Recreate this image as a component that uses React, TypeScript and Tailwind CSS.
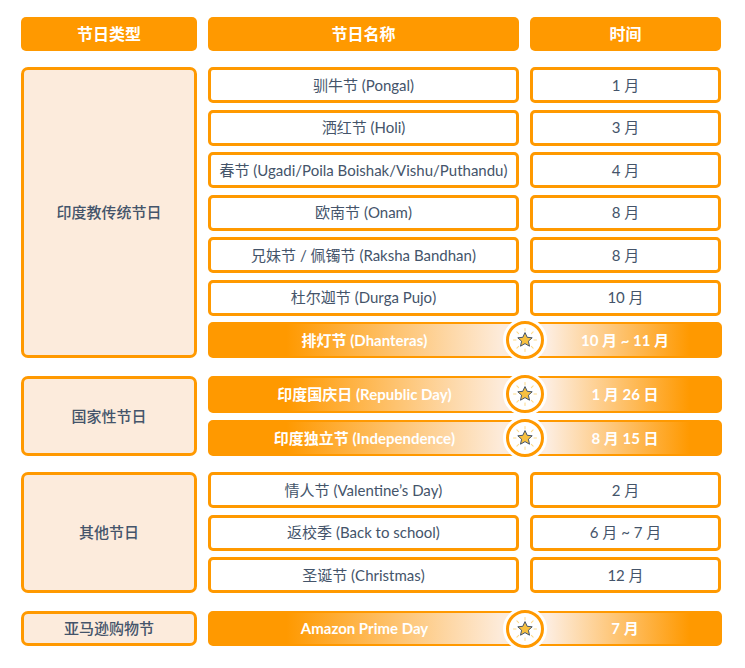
import React from "react";

type Row = { name: string; time: string; hl?: boolean };
type Group = { label: string; rows: Row[]; mt: string; rowH: string; gap: string };

const groups: Group[] = [
  {
    label: "印度教传统节日",
    mt: "mt-[16px]",
    rowH: "h-[36px]",
    gap: "gap-[6.5px]",
    rows: [
      { name: "驯牛节 (Pongal)", time: "1 月" },
      { name: "洒红节 (Holi)", time: "3 月" },
      { name: "春节 (Ugadi/Poila Boishak/Vishu/Puthandu)", time: "4 月" },
      { name: "欧南节 (Onam)", time: "8 月" },
      { name: "兄妹节 / 佩镯节 (Raksha Bandhan)", time: "8 月" },
      { name: "杜尔迦节 (Durga Pujo)", time: "10 月" },
      { name: "排灯节 (Dhanteras)", time: "10 月 ~ 11 月", hl: true },
    ],
  },
  {
    label: "国家性节日",
    mt: "mt-[18px]",
    rowH: "h-[36.5px]",
    gap: "gap-[7px]",
    rows: [
      { name: "印度国庆日 (Republic Day)", time: "1 月 26 日", hl: true },
      { name: "印度独立节 (Independence)", time: "8 月 15 日", hl: true },
    ],
  },
  {
    label: "其他节日",
    mt: "mt-[16px]",
    rowH: "h-[36px]",
    gap: "gap-[6.5px]",
    rows: [
      { name: "情人节 (Valentine’s Day)", time: "2 月" },
      { name: "返校季 (Back to school)", time: "6 月 ~ 7 月" },
      { name: "圣诞节 (Christmas)", time: "12 月" },
    ],
  },
  {
    label: "亚马逊购物节",
    mt: "mt-[18px]",
    rowH: "h-[35px]",
    gap: "gap-[6.5px]",
    rows: [{ name: "Amazon Prime Day", time: "7 月", hl: true }],
  },
];

function StarBadge() {
  const rays = [0, 45, 90, 135, 180, 225, 270, 315];
  return (
    <div className="absolute left-[316.5px] top-1/2 -translate-x-1/2 -translate-y-1/2 w-[44px] h-[44px] rounded-full bg-white flex items-center justify-center">
      <div className="w-[38px] h-[38px] rounded-full border-[3px] border-[#ff9900] bg-white flex items-center justify-center">
        <svg width="30" height="30" viewBox="0 0 30 30">
          {rays.map((a) => (
            <line
              key={a}
              x1="15"
              y1="3.5"
              x2="15"
              y2="6"
              stroke="#fbd98a"
              strokeWidth="1"
              strokeLinecap="round"
              transform={`rotate(${a} 15 15)`}
            />
          ))}
          <path
            d="M15 7.6 L17.2 12.3 L22.2 12.8 L18.4 16.2 L19.5 21.2 L15 18.6 L10.5 21.2 L11.6 16.2 L7.8 12.8 L12.8 12.3 Z"
            fill="#f7c040"
            stroke="#44546a"
            strokeWidth="1"
            strokeLinejoin="round"
          />
        </svg>
      </div>
    </div>
  );
}

function RowView({ row, h }: { row: Row; h: string }) {
  if (row.hl) {
    return (
      <div className={`relative w-[514px] ${h}`}>
        <div className="h-full grid grid-cols-[309px_190px] gap-x-[11px] rounded-[5px] border-2 border-[#ff9900] bg-[linear-gradient(to_right,#ff9900_0%,#ff9900_15%,#fdebda_57%,#fdeee2_66%,#ff9900_94%,#ff9900_100%)]">
          <div className="flex items-center justify-center text-white font-bold text-[15px]">
            {row.name}
          </div>
          <div className="flex items-center justify-center text-white font-bold text-[15px]">
            {row.time}
          </div>
        </div>
        <StarBadge />
      </div>
    );
  }
  return (
    <div className={`grid grid-cols-[311px_191px] gap-x-[11px] ${h}`}>
      <div className="flex items-center justify-center rounded-[5px] border-[3px] border-[#ff9900] bg-white text-[15px] text-[#44546a]">
        {row.name}
      </div>
      <div className="flex items-center justify-center rounded-[5px] border-[3px] border-[#ff9900] bg-white text-[15px] text-[#44546a]">
        {row.time}
      </div>
    </div>
  );
}

export default function App() {
  return (
    <div className="w-[745px] h-[668px] bg-white pt-[17px] pl-[21px] font-['Lato','Noto_Sans_CJK_SC',sans-serif]">
      <div className="grid grid-cols-[176px_311px_191px] gap-x-[11px] h-[34px]">
        <div className="flex items-center justify-center rounded-[5px] bg-[#ff9900] text-white font-bold text-[16px]">
          节日类型
        </div>
        <div className="flex items-center justify-center rounded-[5px] bg-[#ff9900] text-white font-bold text-[16px]">
          节日名称
        </div>
        <div className="flex items-center justify-center rounded-[5px] bg-[#ff9900] text-white font-bold text-[16px]">
          时间
        </div>
      </div>
      {groups.map((g) => (
        <div key={g.label} className={`flex gap-x-[11px] ${g.mt}`}>
          <div className="w-[176px] shrink-0 flex items-center justify-center rounded-[7px] border-[3px] border-[#ff9900] bg-[#fcebdc] text-[15px] font-medium text-[#44546a]">
            {g.label}
          </div>
          <div className={`flex flex-col ${g.gap}`}>
            {g.rows.map((r) => (
              <RowView key={r.name} row={r} h={g.rowH} />
            ))}
          </div>
        </div>
      ))}
    </div>
  );
}
